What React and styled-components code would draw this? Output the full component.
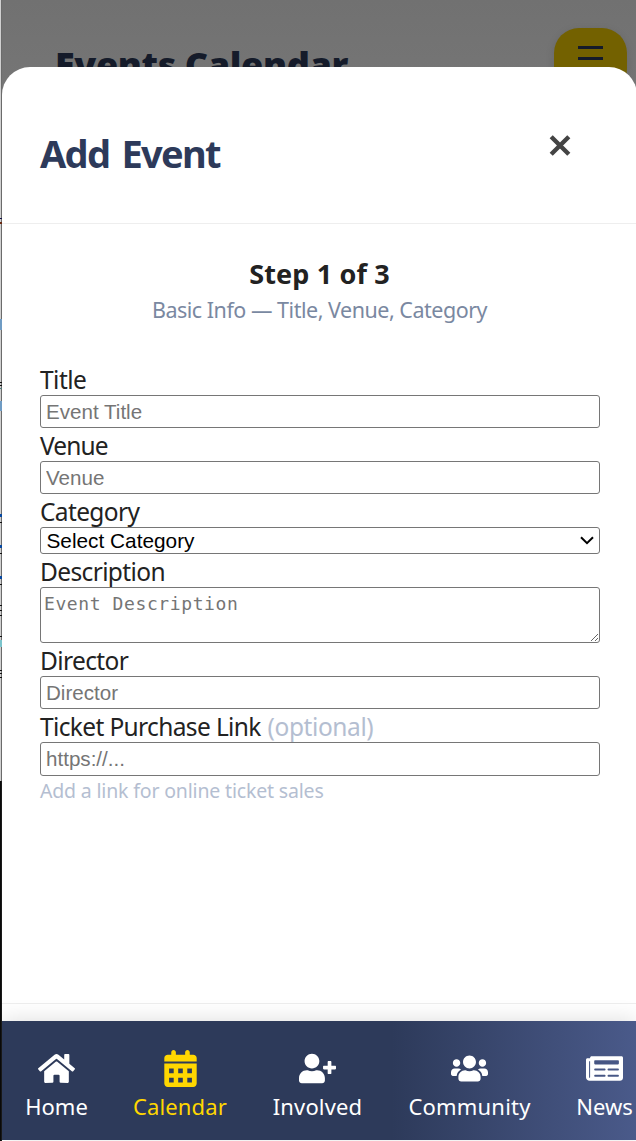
import React from "react";
import styled, { createGlobalStyle } from "styled-components";
import { FaHome, FaUserPlus, FaUsers, FaNewspaper } from "react-icons/fa";

const GlobalStyle = createGlobalStyle`
  * { box-sizing: border-box; }
  body { margin: 0; background: #fff; font-family: "Segoe UI", "Noto Sans", sans-serif; color: #222; }
`;

const Screen = styled.div`
  position: relative;
  display: flex;
  width: 636px;
  height: 1141px;
  overflow: hidden;
`;

const Edge = styled.div`
  position: relative;
  flex: 0 0 2px;
  border-right: 1px solid #6b6b6b;
  background: linear-gradient(#d0d0d0 781px, #0a0a0a 781px);
  &::after {
    content: "";
    position: absolute;
    left: 1px;
    top: 781px;
    width: 1px;
    bottom: 0;
    background: #1a1a1a;
  }
`;

const EdgeMark = styled.i`
  position: absolute;
  left: 0;
  top: ${(p) => p.$top}px;
  width: 2px;
  height: ${(p) => p.$height}px;
  background: ${(p) => p.$color};
`;

const Page = styled.main`
  position: relative;
  flex: 1;
  min-width: 0;
  background: linear-gradient(#717171, #767676 100px);
`;

const PageHeader = styled.header`
  display: flex;
  justify-content: space-between;
  align-items: flex-start;
  padding: 28px 9px 0 53px;
`;

const PageTitle = styled.h1`
  margin: 14px 0 0;
  font-size: 36px;
  line-height: 46px;
  font-weight: 900;
  letter-spacing: -0.4px;
  color: #151b2a;
  white-space: nowrap;
`;

const MenuButton = styled.button`
  display: flex;
  flex-direction: column;
  align-items: center;
  gap: 8px;
  width: 73px;
  height: 66px;
  padding: 18px 0 0;
  border: 0;
  border-radius: 25px;
  background: #736100;
  box-shadow: 0 3px 10px rgba(0, 0, 0, 0.12);
`;

const MenuBar = styled.span`
  width: 25px;
  height: 3px;
  background: #151b2a;
`;

const Modal = styled.section`
  position: absolute;
  inset: 67px -1px 0 0;
  display: flex;
  flex-direction: column;
  border-radius: 28px 28px 0 0;
  background: #fff;
`;

const ModalHeader = styled.div`
  display: flex;
  justify-content: space-between;
  height: 157px;
  padding: 59px 66px 0 38px;
  border-bottom: 1px solid #eee;
`;

const ModalTitle = styled.h2`
  margin: 0;
  font-size: 38px;
  line-height: 54px;
  font-weight: 700;
  letter-spacing: -1.7px;
  word-spacing: 4px;
  color: #2d3a5a;
`;

const CloseButton = styled.button`
  display: flex;
  align-self: flex-start;
  margin-top: 8px;
  padding: 0;
  border: 0;
  background: none;
`;

const Steps = styled.div`
  display: flex;
  flex-direction: column;
  align-items: center;
  padding: 31px 0 0;
  height: 138px;
`;

const StepTitle = styled.div`
  font-size: 27px;
  line-height: 37px;
  font-weight: 700;
  letter-spacing: 0.15px;
`;

const StepInfo = styled.div`
  font-size: 21.5px;
  line-height: 35px;
  letter-spacing: -0.48px;
  color: #7a88a1;
`;

const Form = styled.form`
  display: flex;
  flex-direction: column;
  flex: 1;
  padding: 0 37px 0 38px;
`;

const Field = styled.label`
  display: flex;
  flex-direction: column;
`;

const Label = styled.span`
  height: 33px;
  padding-top: 1px;
  font-size: 24.5px;
  line-height: 33px;
  letter-spacing: ${(p) => p.$spacing || -0.63}px;
  white-space: nowrap;
`;

const Optional = styled.span`
  margin-left: 1px;
  color: #b4bed1;
  letter-spacing: -0.4px;
`;

const Input = styled.input`
  height: ${(p) => p.$height || 33}px;
  padding: 0 5px;
  border: 1px solid #767676;
  border-radius: 3px;
  font: 20.6px "Liberation Sans", Arial, sans-serif;
  &::placeholder { color: #757575; }
`;

const SelectBox = styled.div`
  display: flex;
  align-items: center;
  justify-content: space-between;
  height: 27px;
  padding: 0 5px 0 5.5px;
  border: 1px solid #767676;
  border-radius: 3px;
  color: #000;
  font: 20.8px/25px "Liberation Sans", Arial, sans-serif;
`;

const TextArea = styled.textarea`
  height: 56px;
  padding: 3px 3px 2px;
  border: 1px solid #767676;
  border-radius: 3px;
  font: 18px/26px Consolas, "DejaVu Sans Mono", monospace;
  letter-spacing: 0.6px;
  resize: vertical;
  &::placeholder { color: #757575; }
`;

const Hint = styled.small`
  font-size: 19.5px;
  line-height: 30px;
  letter-spacing: -0.17px;
  color: #b4bed1;
`;

const ModalFooter = styled.div`
  height: 138px;
  border-top: 1px solid #eee;
`;

const Nav = styled.nav`
  position: absolute;
  left: 0;
  right: 0;
  bottom: 1px;
  display: flex;
  gap: 45px;
  height: 119px;
  padding: 29px 0 0 23px;
  background: linear-gradient(90deg, #2d3a5a 390px, #4a5a8a 634px);
  box-shadow: 0 -2px 20px rgba(0, 0, 0, 0.12);
`;

const NavItem = styled.a`
  display: flex;
  flex: 0 0 ${(p) => p.$width}px;
  flex-direction: column;
  align-items: center;
  color: ${(p) => (p.$active ? "#ffd700" : "#fff")};
  font-size: 22px;
  line-height: 32px;
  letter-spacing: ${(p) => p.$spacing}px;
  white-space: nowrap;
  svg { display: block; width: 37px; height: 37px; margin-bottom: 3px; }
`;

const CalendarIcon = () => (
  <svg viewBox="0 0 448 512" fill="currentColor">
    <path
      fillRule="evenodd"
      d="M128 0c17.7 0 32 14.3 32 32v32h128V32c0-17.7 14.3-32 32-32s32 14.3 32 32v32h48c26.500 0 48 21.500 48 48v48H0v-48C0 85.500 21.500 64 48 64h48V32c0-17.700 14.300-32 32-32zM0 186h448v278c0 26.500-21.500 48-48 48H48c-26.500 0-48-21.500-48-48zM66 256v64h64v-64zM192 256v64h64v-64zM318 256v64h64v-64zM66 384v64h64v-64zM192 384v64h64v-64zM318 384v64h64v-64z"
    />
  </svg>
);

const edgeMarks = [
  [218, 1, "#111144"], [222, 2, "#6b2a12"], [319, 11, "#6f9cc4"],
  [382, 1, "#111"], [385, 1, "#111"], [388, 1, "#4c7777"],
  [401, 10, "#6f9cc4"],
  [514, 3, "#0849a0"], [522, 1, "#111"], [545, 3, "#0849a0"], [553, 1, "#111"],
  [576, 3, "#0849a0"], [584, 1, "#111"], [605, 1, "#111"], [610, 1, "#111"], [615, 1, "#111"],
  [636, 1, "#111"], [640, 7, "#7bc4cc"], [670, 1, "#111"], [673, 1, "#111"], [677, 1, "#111"],
];

const tabs = [
  { name: "Home", Icon: FaHome, width: 63, spacing: 0 },
  { name: "Calendar", Icon: CalendarIcon, width: 94, spacing: 0.12, active: true },
  { name: "Involved", Icon: FaUserPlus, width: 91, spacing: 0.15 },
  { name: "Community", Icon: FaUsers, width: 123, spacing: 0.2 },
  { name: "News", Icon: FaNewspaper, width: 57, spacing: 0 },
];

export default function App() {
  return (
    <>
      <GlobalStyle />
      <Screen>
        <Edge>
          {edgeMarks.map(([top, height, color]) => (
            <EdgeMark key={top} $top={top} $height={height} $color={color} />
          ))}
        </Edge>
        <Page>
          <PageHeader>
            <PageTitle>Events Calendar</PageTitle>
            <MenuButton aria-label="Menu"><MenuBar /><MenuBar /><MenuBar /></MenuButton>
          </PageHeader>
          <Modal>
            <ModalHeader>
              <ModalTitle>Add Event</ModalTitle>
              <CloseButton aria-label="Close">
                <svg width="22" height="22" viewBox="0 0 22 22">
                  <path d="M2.2 2.7 19.8 20.3M19.8 2.7 2.2 20.3" stroke="#444" strokeWidth="4.4" />
                </svg>
              </CloseButton>
            </ModalHeader>
            <Steps>
              <StepTitle>Step 1 of 3</StepTitle>
              <StepInfo>Basic Info — Title, Venue, Category</StepInfo>
            </Steps>
            <Form>
              <Field><Label $spacing={-0.5}>Title</Label><Input placeholder="Event Title" /></Field>
              <Field><Label $spacing={-0.9}>Venue</Label><Input placeholder="Venue" /></Field>
              <Field>
                <Label>Category</Label>
                <SelectBox>
                  Select Category
                  <svg width="14" height="9" viewBox="0 0 14 9">
                    <path d="M1 1.2 7 7.2 13 1.2" fill="none" stroke="#000" strokeWidth="2" />
                  </svg>
                </SelectBox>
              </Field>
              <Field><Label>Description</Label><TextArea placeholder="Event Description" /></Field>
              <Field><Label>Director</Label><Input placeholder="Director" /></Field>
              <Field>
                <Label>Ticket Purchase Link <Optional>(optional)</Optional></Label>
                <Input $height={34} placeholder="https://..." />
              </Field>
              <Hint>Add a link for online ticket sales</Hint>
            </Form>
            <ModalFooter />
          </Modal>
          <Nav>
            {tabs.map(({ name, Icon, width, spacing, active }) => (
              <NavItem key={name} $width={width} $spacing={spacing} $active={active}>
                <Icon />
                {name}
              </NavItem>
            ))}
          </Nav>
        </Page>
      </Screen>
    </>
  );
}
